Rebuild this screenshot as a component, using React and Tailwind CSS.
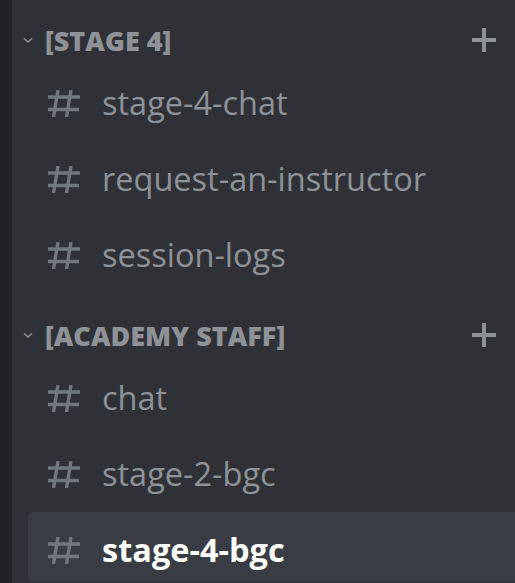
const Hash = ({ className }) => (
  <svg viewBox="0 0 32 27" className={className} fill="none" stroke="currentColor" strokeWidth="3.4">
    <path d="M10 0 5.5 27M23 0l-4.5 27M0 7h32M0 19.5h31" />
  </svg>
);

const Category = ({ name }) => (
  <div className="h-[44px] flex items-center pl-[10px] pr-[19px]">
    <svg viewBox="0 0 12 12" className="w-[12px] h-[12px] text-[#8e9297]" fill="none" stroke="currentColor" strokeWidth="1.6">
      <path d="M2 4.5 6 8l4-3.5" />
    </svg>
    <span className="ml-[11px] text-[27px] font-extrabold text-[#8e9297] leading-none">{name}</span>
    <svg viewBox="0 0 24 24" className="ml-auto w-[24px] h-[24px] text-[#8e9297]" fill="currentColor">
      <rect x="10" y="0" width="4" height="24" />
      <rect x="0" y="10" width="24" height="4" />
    </svg>
  </div>
);

const Channel = ({ name, selected }) => (
  <div className={`h-[70px] ml-[16px] -mr-[10px] rounded-[6px] flex items-center pl-[20px] ${selected ? 'bg-[#393c43]' : ''}`}>
    <Hash className="mt-[7px] w-[32px] h-[27px] text-[#72767d]" />
    <span className={`mt-[6px] ml-[22px] text-[32.5px] leading-none ${selected ? 'text-white font-bold' : 'text-[#8e9297]'}`}>{name}</span>
  </div>
);

export default function App() {
  return (
    <div className="w-[515px] h-[583px] overflow-hidden flex bg-[#2f3136]" style={{ fontFamily: '"Open Sans", "Noto Sans", sans-serif' }}>
      <div className="w-[12px] bg-[#202225] shrink-0" />
      <div className="flex-1 flex flex-col pt-[18px]">
        <Category name="[STAGE 4]" />
        <div className="flex flex-col gap-[6px] pt-[3px]">
          <Channel name="stage-4-chat" />
          <Channel name="request-an-instructor" />
          <Channel name="session-logs" />
        </div>
        <div className="mt-[26px]">
          <Category name="[ACADEMY STAFF]" />
        </div>
        <div className="flex flex-col gap-[6px] pt-[3px]">
          <Channel name="chat" />
          <Channel name="stage-2-bgc" />
          <Channel name="stage-4-bgc" selected />
        </div>
      </div>
    </div>
  );
}
